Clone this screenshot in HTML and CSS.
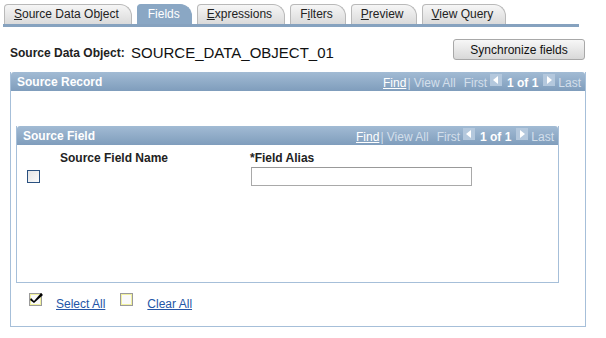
FILE: index.html
```html
<!DOCTYPE html>
<html>
<head lang="en">
    <meta charset="UTF-8">
    <title>Fields</title>
    <link rel="stylesheet" href="styles.css">
</head>
<body>
    <div class="tabs">
        <div class="tab"><u>S</u>ource Data Object</div>
        <div class="tab active">Fields</div>
        <div class="tab"><u>E</u>xpressions</div>
        <div class="tab">F<u>i</u>lters</div>
        <div class="tab"><u>P</u>review</div>
        <div class="tab"><u>V</u>iew Query</div>
    </div>

    <div class="topline">
        <span class="lbl">Source Data Object:</span>
        <span class="val">SOURCE_DATA_OBJECT_01</span>
        <button class="sync">Synchronize fields</button>
    </div>

    <div class="box record">
        <div class="head">
            <span class="title">Source Record</span>
            <span class="nav">
                <a class="find">Find</a> | View All <span class="sp">First</span>
                <i class="arr left"></i><b>1 of 1</b><i class="arr right"></i> Last
            </span>
        </div>
        <div class="record-body">
            <div class="box field">
                <div class="head">
                    <span class="title">Source Field</span>
                    <span class="nav">
                        <a class="find">Find</a> | View All <span class="sp">First</span>
                        <i class="arr left"></i><b>1 of 1</b><i class="arr right"></i> Last
                    </span>
                </div>
                <div class="grid">
                    <div class="colhead">
                        <span class="c1">Source Field Name</span>
                        <span class="c2">*Field Alias</span>
                    </div>
                    <div class="row">
                        <span class="chk"></span>
                        <input class="alias" type="text">
                    </div>
                </div>
            </div>
            <div class="actions">
                <span class="ck on">
                    <svg width="14" height="12" viewBox="0 0 14 12"><path d="M1 6 L4 9 L11 1 L13 3 L4 11 L0 8 Z" fill="#000"/></svg>
                </span>
                <a class="link">Select All</a>
                <span class="ck"></span>
                <a class="link">Clear All</a>
            </div>
        </div>
    </div>
</body>
</html>
```

FILE: styles.css
```css
*{
    box-sizing: border-box;
}
body{
    margin: 0;
    font-family: "Liberation Sans", Arial, sans-serif;
    font-size: 12px;
    color: #000;
    background: #fff;
}
.tabs{
    display: flex;
    gap: 5px;
    margin: 4px 0 0 3px;
    width: 576px;
    height: 23px;
    border-bottom: 3px solid #86a2bf;
    padding-left: 1px;
}
.tab{
    height: 20px;
    line-height: 19px;
    padding: 0 12px 0 9px;
    font-size: 12px;
    color: #222;
    background: linear-gradient(#f6f6f6, #dadada);
    border: 1px solid #b9b9b9;
    border-bottom: none;
    border-radius: 4px 12px 0 0;
}
.tab u{
    text-decoration: underline;
}
.tab.active{
    background: #8aa7c4;
    border-color: #8aa7c4;
    color: #fff;
    padding: 0 11px 0 10px;
}
.topline{
    display: flex;
    align-items: center;
    margin: 12px 0 0 10px;
    height: 21px;
    width: 575px;
}
.lbl{
    font-weight: bold;
    font-size: 12px;
    color: #222;
    width: 121px;
    padding-top: 6px;
}
.val{
    font-size: 15px;
    color: #111;
    padding-top: 6px;
}
.sync{
    margin-left: auto;
    width: 132px;
    height: 21px;
    font-family: "Liberation Sans", Arial, sans-serif;
    font-size: 12px;
    color: #111;
    background: linear-gradient(#f7f7f7, #d8d8d8);
    border: 1px solid #a8a8a8;
    border-radius: 3px;
    padding: 0;
}
.box{
    border: 1px solid #a6bfd9;
    border-top: none;
}
.record{
    margin: 12px 0 0 10px;
    width: 576px;
    height: 255px;
}
.head{
    display: flex;
    align-items: center;
    height: 19px;
    background: linear-gradient(#a2bbd4, #7f9dbc);
    color: #fff;
    padding: 0 4px 0 6px;
    border-radius: 3px 3px 0 0;
}
.title{
    font-weight: bold;
    font-size: 12px;
    color: #fff;
}
.nav{
    margin-left: auto;
    font-size: 12px;
    color: #d3dfeb;
    display: flex;
    align-items: center;
    gap: 1px;
    padding-top: 3px;
}
.find{
    color: #fff;
    text-decoration: underline;
}
.sp{
    margin-left: 7px;
}
.nav b{
    color: #fff;
    margin: 0 2px;
}
.arr{
    display: inline-block;
    width: 12px;
    height: 12px;
    background: #b4c8dd;
    position: relative;
    top: -3px;
    margin: 0 2px;
}
.arr::after{
    content: "";
    position: absolute;
    top: 2px;
    border-top: 4px solid transparent;
    border-bottom: 4px solid transparent;
}
.arr.left::after{
    left: 3px;
    border-right: 5px solid #fff;
}
.arr.right::after{
    left: 4px;
    border-left: 5px solid #fff;
}
.record-body{
    padding: 35px 0 0 5px;
}
.field{
    width: 543px;
    height: 157px;
}
.grid{
    padding-top: 6px;
}
.colhead{
    display: flex;
    font-weight: bold;
    font-size: 12px;
    color: #222;
    height: 14px;
}
.c1{
    margin-left: 43px;
    width: 190px;
}
.row{
    display: flex;
    align-items: flex-start;
    margin-top: 2px;
}
.chk{
    display: inline-block;
    width: 13px;
    height: 13px;
    margin: 3px 0 0 10px;
    border: 1px solid #2a5180;
    background: linear-gradient(135deg, #e4e4e4, #fbfbfb);
}
.alias{
    margin-left: 211px;
    width: 221px;
    height: 19px;
    border: 1px solid #a9a9a9;
    border-top-color: #999;
}
.actions{
    display: flex;
    align-items: flex-end;
    margin: 10px 0 0 13px;
    height: 18px;
}
.ck{
    display: inline-block;
    width: 13px;
    height: 13px;
    border: 1px solid #9a9a9a;
    outline: 1px solid #f1f1a0;
    outline-offset: -2px;
    background: #fafafa;
    position: relative;
    align-self: flex-start;
}
.ck svg{
    position: absolute;
    left: 0;
    top: -2px;
}
.link{
    color: #2455a6;
    text-decoration: underline;
    font-size: 12px;
    margin: 0 15px 0 14px;
}
```
